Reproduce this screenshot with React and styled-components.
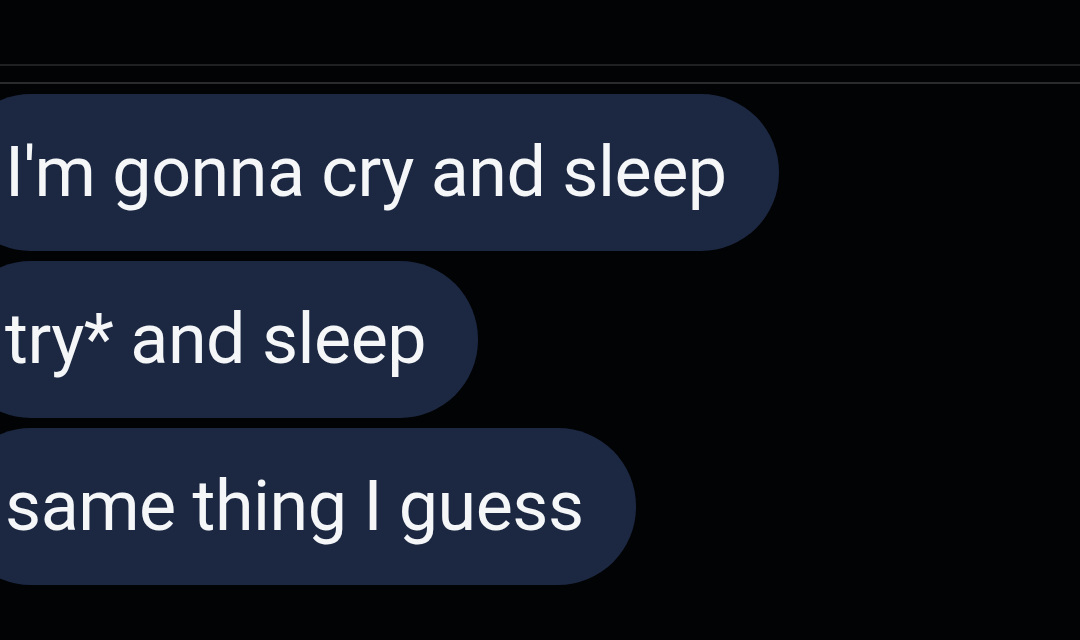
import React from 'react'
import styled, { createGlobalStyle } from 'styled-components'

const Global = createGlobalStyle`
  html, body {
    margin: 0;
    padding: 0;
    background: #020305;
  }
  body {
    font-family: Roboto, 'Noto Sans', 'Liberation Sans', sans-serif;
    overflow: hidden;
  }
`

const Screen = styled.div`
  width: 1080px;
  height: 640px;
  background: #020305;
  overflow: hidden;
`

const TopBar = styled.div`
  height: 64px;
  border-bottom: 2px solid #1f2022;
`

const Divider = styled.div`
  height: 16px;
  border-bottom: 2px solid #2a2b2d;
`

const Thread = styled.div`
  display: flex;
  flex-direction: column;
  align-items: flex-start;
  gap: 10px;
  padding-top: 10px;
`

const Bubble = styled.div`
  margin-left: -47px;
  padding: 0 52px 0 52px;
  height: 157px;
  line-height: 157px;
  border-radius: 78px;
  background: #1c2842;
  color: #f4f6f8;
  font-size: 70px;
  letter-spacing: -0.5px;
  white-space: nowrap;
`

const messages = ["I'm gonna cry and sleep", 'try* and sleep', 'same thing I guess']

const App = () => (
  <Screen>
    <Global />
    <TopBar />
    <Divider />
    <Thread>
      {messages.map(m => (
        <Bubble key={m}>{m}</Bubble>
      ))}
    </Thread>
  </Screen>
)

export default App
